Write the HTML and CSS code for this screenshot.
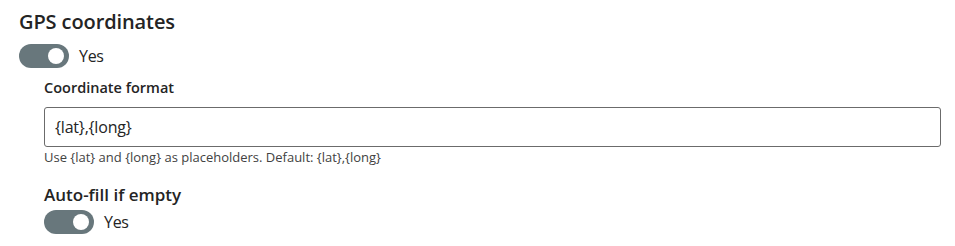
FILE: index.html
```html
<!DOCTYPE html>
<html lang="en">
<head>
    <meta charset="UTF-8">
    <title>GPS coordinates</title>
    <link rel="stylesheet" href="styles.css">
</head>
<body>
    <div class="settings">
        <h2 class="section-title">GPS coordinates</h2>
        <label class="switch-row">
            <span class="switch on"><span class="knob"></span></span>
            <span class="switch-label">Yes</span>
        </label>
        <div class="sub-settings">
            <div class="field">
                <label class="field-label" for="coord-format">Coordinate format</label>
                <input class="text-input" id="coord-format" type="text" value="{lat},{long}">
                <div class="help">Use {lat} and {long} as placeholders. Default: {lat},{long}</div>
            </div>
            <div class="field">
                <div class="field-title">Auto-fill if empty</div>
                <label class="switch-row tight">
                    <span class="switch on"><span class="knob"></span></span>
                    <span class="switch-label">Yes</span>
                </label>
            </div>
        </div>
    </div>
</body>
</html>
```

FILE: styles.css
```css
body {
    margin: 0;
    padding: 9px 14px 0 19px;
    font-family: 'Open Sans', 'Noto Sans', sans-serif;
    color: #242424;
    background-color: #fff;
}
.section-title {
    margin: 0 0 8px 0;
    font-size: 20px;
    font-weight: 600;
    line-height: 26px;
    letter-spacing: -0.1px;
}
.switch-row {
    display: flex;
    align-items: center;
    gap: 10px;
    height: 26px;
}
.switch {
    display: flex;
    align-items: center;
    justify-content: flex-end;
    width: 50px;
    height: 24px;
    box-sizing: border-box;
    padding-right: 5px;
    border-radius: 12px;
    background-color: #68777c;
}
.knob {
    width: 16px;
    height: 16px;
    border-radius: 50%;
    background-color: #fff;
}
.switch-label {
    font-size: 16px;
    letter-spacing: -0.3px;
}
.sub-settings {
    padding-left: 25px;
    margin-top: 9px;
}
.field-label {
    display: block;
    font-size: 14.5px;
    font-weight: 600;
    line-height: 20px;
    margin-bottom: 9px;
}
.text-input {
    display: block;
    width: 100%;
    height: 40px;
    box-sizing: border-box;
    padding: 0 10px;
    border: 1px solid #6b6b6b;
    border-radius: 3px;
    font-family: inherit;
    font-size: 16px;
    color: #242424;
    letter-spacing: -0.2px;
}
.help {
    margin-top: 2px;
    font-size: 13px;
    line-height: 16px;
    color: #424242;
}
.field + .field {
    margin-top: 19px;
}
.field-title {
    font-size: 17px;
    font-weight: 600;
    line-height: 22px;
    margin-bottom: 3px;
}
```
